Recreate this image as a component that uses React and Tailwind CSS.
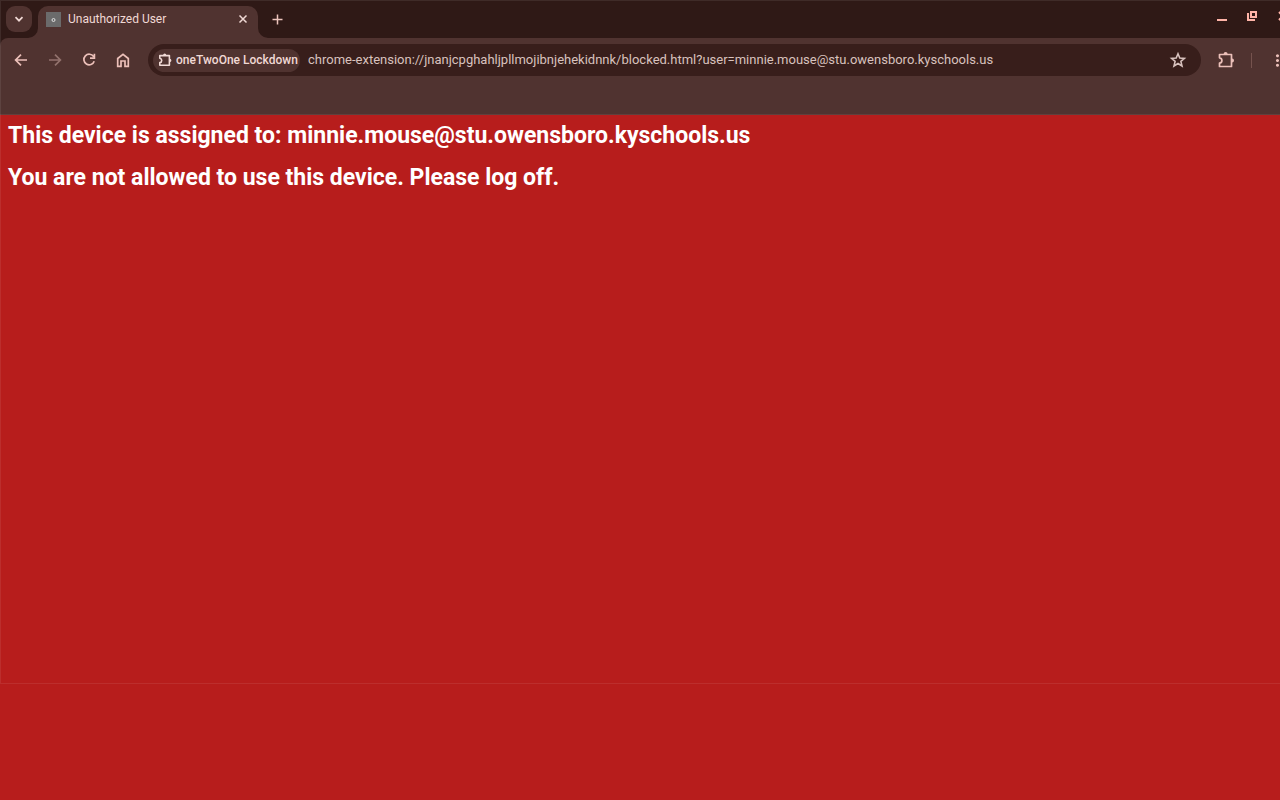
import React from "react";
import { MdMoreVert } from "react-icons/md";

function Stroke({ d, size = 16, width = 2, className = "" }) {
  return (
    <svg width={size} height={size} viewBox={`0 0 ${size} ${size}`} fill="none" stroke="currentColor" strokeWidth={width} className={className} aria-hidden="true">
      <path d={d} />
    </svg>
  );
}

function PuzzleIcon({ size, stroke }) {
  return (
    <svg width={size} height={size} viewBox="0 0 20 20" fill="none" stroke="currentColor" strokeWidth={stroke} strokeLinejoin="round" aria-hidden="true">
      <path d="M3.5 4.5H15.5V16.5H3.5V13.2C5 13 5.9 12 5.9 10.5S5 8 3.5 7.8Z" />
      <path d="M7.6 4a2 2 0 0 1 4 0ZM16 8.5a2 2 0 0 1 0 4Z" fill="currentColor" stroke="none" />
    </svg>
  );
}

function Flare({ flip }) {
  return (
    <svg width="10" height="10" viewBox="0 0 10 10" className="shrink-0 self-end" aria-hidden="true">
      <path d={flip ? "M0 0A10 10 0 0 0 10 10H0Z" : "M10 0A10 10 0 0 1 0 10H10Z"} fill="#503330" />
    </svg>
  );
}

function TabStrip() {
  return (
    <header className="flex h-[38px] bg-[#2f1916] pl-1.5 text-[#f0d9d5]">
      <button aria-label="Search tabs" className="mt-1.5 flex size-[26px] shrink-0 items-center justify-center rounded-[9px] bg-[#503330]">
        <Stroke size={10} width={1.7} d="M1.5 3.2L5 6.7L8.5 3.2" />
      </button>
      <div className="-ml-1 flex shrink-0">
        <Flare />
        <div className="mt-1.5 flex w-[220px] items-center rounded-t-[10px] bg-[#503330] pr-2.5 pb-1.5 pl-2">
          <span className="flex size-[15px] items-center justify-center bg-[#6b6b6b]">
            <svg width="7" height="7" viewBox="0 0 7 7" fill="none" stroke="#e0e0e0" aria-hidden="true"><circle cx="3.5" cy="4" r="1.5" /></svg>
          </span>
          <span className="ml-[7px] grow text-xs">Unauthorized User</span>
          <button aria-label="Close tab" className="flex size-[10px] items-center justify-center">
            <Stroke size={10} width={1.5} d="M1.5 1.5L8.5 8.5M8.5 1.5L1.5 8.5" />
          </button>
        </div>
        <Flare flip />
      </div>
      <button aria-label="New tab" className="ml-1 flex h-[38px] w-[11px] items-center justify-center text-[#ecc4bc]">
        <Stroke size={11} width={1.5} d="M5.5 0.5V10.5M0.5 5.5H10.5" />
      </button>
      <div className="-mr-2 ml-auto flex h-[38px] shrink-0 items-start gap-5 pt-[11px] text-[#ffb4a8]">
        <button aria-label="Minimize" className="-ml-px"><Stroke size={10} d="M0 9H10" /></button>
        <button aria-label="Restore">
          <svg width="10" height="10" viewBox="0 0 10 10" fill="none" stroke="currentColor" strokeWidth="2" aria-hidden="true">
            <path d="M4 1H9V6H4Z" />
            <path d="M1 2V9H8" />
          </svg>
        </button>
        <button aria-label="Close window" className="pl-px"><Stroke size={10} d="M1 1L9 9M9 1L1 9" /></button>
      </div>
    </header>
  );
}

function Toolbar() {
  return (
    <div className="bg-[#2f1916]">
      <nav className="flex h-[76px] items-start rounded-tl-lg bg-[#503330] pt-1.5 text-[#ecc0b9]">
        <div className="flex h-8 w-[148px] shrink-0 items-center gap-[18px] pl-[13px]">
          <button aria-label="Back"><Stroke width={1.7} d="M14 8H3M8 2.6L2.6 8L8 13.4" /></button>
          <button aria-label="Forward" disabled className="text-[#92726d]"><Stroke width={1.7} d="M2 8H13M8 2.6L13.4 8L8 13.4" /></button>
          <button aria-label="Reload"><Stroke width={1.7} d="M12.6 4.6A5.3 5.3 0 1 0 13.2 9.2M13.4 1.8V6.2H9" /></button>
          <button aria-label="Home">
            <Stroke width={1.7} d="M2.7 6.5L8 2.4L13.3 6.5V14.3H10V9H6V14.3H2.7Z" />
          </button>
        </div>
        <div className="flex h-8 min-w-0 grow items-center rounded-full bg-[#381e1b] pr-3.5 pl-[5px]">
          <button className="flex h-[23px] w-[147px] shrink-0 items-center gap-[3px] rounded-full bg-[#503330] pl-1 text-xs font-medium whitespace-nowrap text-[#f0d9d5]">
            <PuzzleIcon size={16} stroke={2} />
            oneTwoOne Lockdown
          </button>
          <input
            aria-label="Address"
            readOnly
            value="chrome-extension://jnanjcpghahljpllmojibnjehekidnnk/blocked.html?user=minnie.mouse@stu.owensboro.kyschools.us"
            className="ml-2 min-w-0 grow bg-transparent text-[13px] text-[#d8c2be] outline-none"
          />
          <button aria-label="Bookmark" className="text-[#d8c2be]">
            <Stroke size={18} width={1.6} d="M9 2.8L10.8 7L15.4 7.4L11.9 10.4L13 15L9 12.5L5 15L6.1 10.4L2.6 7.4L7.2 7Z" />
          </button>
        </div>
        <div className="-mr-[7px] flex h-8 shrink-0 items-center pl-[15px]">
          <button aria-label="Extensions"><PuzzleIcon size={20} stroke={1.7} /></button>
          <span className="ml-[15px] h-[15px] w-px bg-[#76534e]" />
          <button aria-label="Menu" className="ml-4"><MdMoreVert size={19} /></button>
        </div>
      </nav>
    </div>
  );
}

export default function App() {
  return (
    <div className="flex min-h-screen flex-col overflow-hidden bg-[#b71d1c] pb-[116px] font-[Roboto,sans-serif]">
      <div className="relative flex grow flex-col">
        <TabStrip />
        <Toolbar />
        <main className="border-t border-[#60403d] px-2 pt-[7px] text-[23px] leading-7 font-bold text-white">
          <h1>This device is assigned to: minnie.mouse@stu.owensboro.kyschools.us</h1>
          <h2 className="mt-3.5">You are not allowed to use this device. Please log off.</h2>
        </main>
        <div className="pointer-events-none absolute inset-0 border-t border-b border-l border-white/8" />
      </div>
    </div>
  );
}
